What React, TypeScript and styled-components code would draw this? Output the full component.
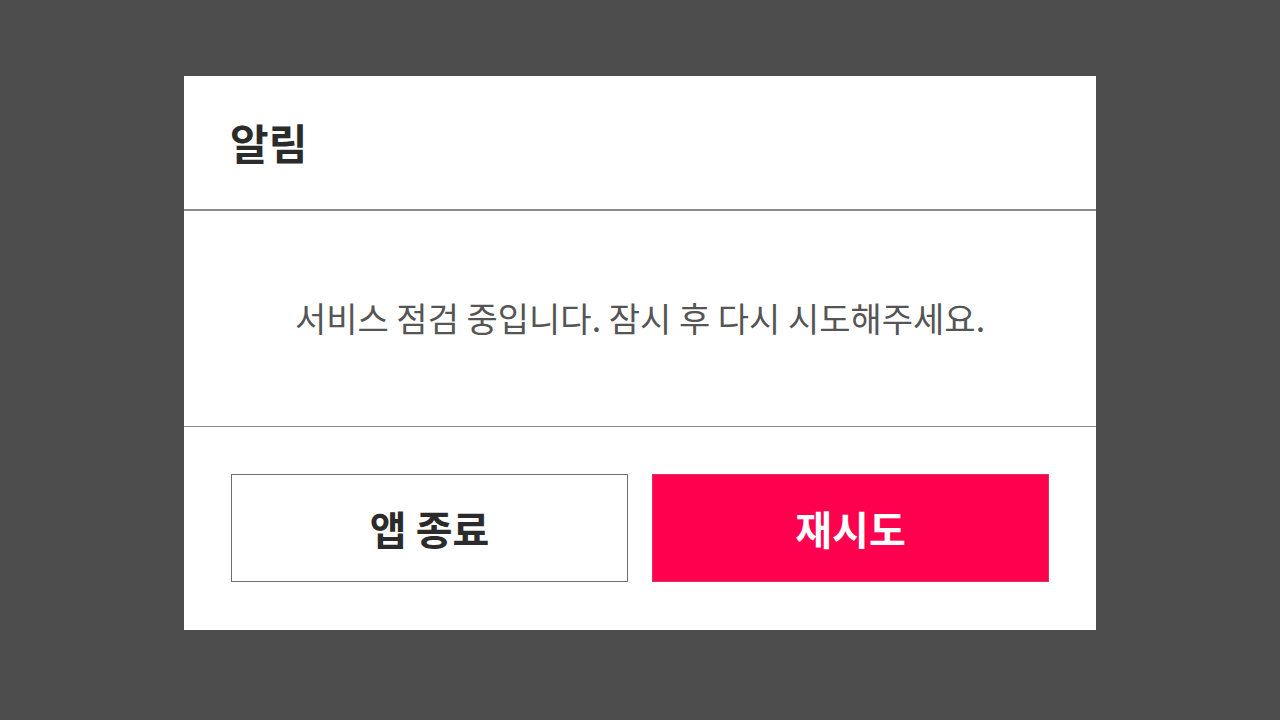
import React from 'react';
import styled, { createGlobalStyle } from 'styled-components';

const GlobalStyle = createGlobalStyle`
  html, body {
    margin: 0;
    padding: 0;
    background: #4d4d4d;
    font-family: "Noto Sans CJK KR", "Noto Sans", sans-serif;
  }
`;

const Backdrop = styled.div`
  width: 1280px;
  height: 720px;
  display: flex;
  justify-content: center;
  padding-top: 76px;
  box-sizing: border-box;
  background: #4d4d4d;
`;

const Dialog = styled.div`
  width: 912px;
  height: 554px;
  background: #fff;
  display: flex;
  flex-direction: column;
`;

const Header = styled.div`
  height: 133px;
  display: flex;
  align-items: center;
  padding-left: 46px;
  border-bottom: 2px solid #8c8c8c;
`;

const Title = styled.h1`
  margin: 0;
  font-size: 42px;
  font-weight: 700;
  color: #2b2b2b;
  padding-bottom: 2px;
`;

const Body = styled.div`
  height: 215px;
  display: flex;
  align-items: center;
  justify-content: center;
  border-bottom: 1px solid #8c8c8c;
`;

const Message = styled.p`
  margin: 0;
  font-size: 34px;
  color: #555;
  padding-bottom: 2px;
`;

const Footer = styled.div`
  flex: 1;
  display: flex;
  gap: 24px;
  padding: 47px;
`;

const Button = styled.button<{ $primary?: boolean }>`
  flex: 1;
  height: 108px;
  font-family: inherit;
  font-size: 40px;
  font-weight: 700;
  cursor: pointer;
  background: ${(p) => (p.$primary ? '#ff004f' : '#fff')};
  color: ${(p) => (p.$primary ? '#fff' : '#2b2b2b')};
  border: 1px solid ${(p) => (p.$primary ? '#e0335f' : '#6e6e6e')};
`;

const App: React.FC = () => (
  <>
    <GlobalStyle />
    <Backdrop>
      <Dialog>
        <Header>
          <Title>알림</Title>
        </Header>
        <Body>
          <Message>서비스 점검 중입니다. 잠시 후 다시 시도해주세요.</Message>
        </Body>
        <Footer>
          <Button>앱 종료</Button>
          <Button $primary>재시도</Button>
        </Footer>
      </Dialog>
    </Backdrop>
  </>
);

export default App;
